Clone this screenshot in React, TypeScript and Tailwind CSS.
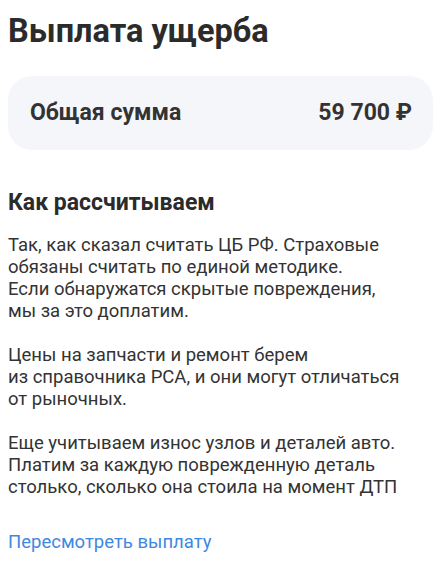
const paragraphs = [
  [
    'Так, как сказал считать ЦБ РФ. Страховые',
    'обязаны считать по единой методике.',
    'Если обнаружатся скрытые повреждения,',
    'мы за это доплатим.',
  ],
  [
    'Цены на запчасти и ремонт берем',
    'из справочника РСА, и они могут отличаться',
    'от рыночных.',
  ],
  [
    'Еще учитываем износ узлов и деталей авто.',
    'Платим за каждую поврежденную деталь',
    'столько, сколько она стоила на момент ДТП',
  ],
];

const App = () => {
  return (
    <div className="w-[441px] h-[574px] bg-white px-2 font-['Roboto',sans-serif] text-[#2f2f2f] overflow-hidden">
      <h1 className="pt-[12px] text-[32.5px] leading-[38px] font-bold text-[#2b2b2b]">Выплата ущерба</h1>

      <div className="mt-[26px] h-[74px] rounded-[24px] bg-[#f4f6f9] pl-[22px] pr-[21px] flex items-center justify-between">
        <span className="text-[23px] font-bold text-[#333]">Общая сумма</span>
        <span className="text-[23px] font-bold text-[#333]">59 700 ₽</span>
      </div>

      <h2 className="mt-[39px] text-[23px] leading-[28px] font-bold text-[#2b2b2b]">Как рассчитываем</h2>

      <div className="mt-[17px] text-[18.5px] leading-[22px] space-y-[22px] text-[#333]">
        {paragraphs.map((lines, i) => (
          <p key={i} className="whitespace-nowrap">
            {lines.map((l, j) => (
              <span key={j} className="block">{l}</span>
            ))}
          </p>
        ))}
      </div>

      <div className="mt-[33px] text-[18.5px] leading-[22px] text-[#3f88e0]">Пересмотреть выплату</div>
    </div>
  );
};

export default App;
